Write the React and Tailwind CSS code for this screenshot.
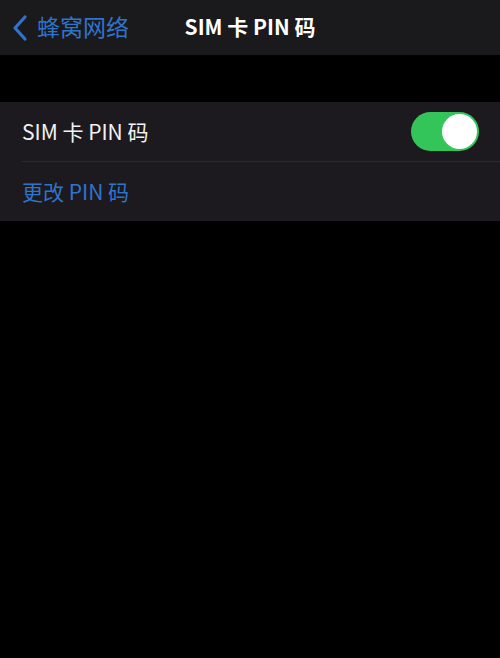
import React, { useState } from "react";

const font = { fontFamily: '"Noto Sans CJK SC", "Noto Sans", sans-serif' };

const App = () => {
  const [enabled, setEnabled] = useState(true);

  return (
    <div className="w-[500px] h-[658px] bg-black text-white overflow-hidden" style={font}>
      {/* Nav bar */}
      <div className="relative h-[55px] bg-[#1a191b] flex items-center">
        <button className="flex items-center pl-[10px] text-[#2f74cc]">
          <svg width="20" height="28" viewBox="0 0 20 28" fill="none">
            <path d="M15 3 L5 14 L15 25" stroke="currentColor" strokeWidth="3.2" strokeLinecap="round" strokeLinejoin="round" />
          </svg>
          <span className="ml-[7px] text-[23px] leading-none -mt-[2px]">蜂窝网络</span>
        </button>
        <div className="absolute left-0 right-0 top-0 h-[52px] flex items-center justify-center pointer-events-none">
          <span className="text-[21px] font-semibold leading-none whitespace-pre">SIM 卡 PIN 码</span>
        </div>
      </div>

      {/* Group */}
      <div className="mt-[47px] bg-[#1c1a1e]">
        <div className="flex items-center justify-between h-[59px] pl-[22px] pr-[21px]">
          <span className="text-[21px] leading-none text-[#f2f2f2] whitespace-pre">SIM 卡 PIN 码</span>
          <button
            onClick={() => setEnabled(!enabled)}
            className={`relative w-[68px] h-[39px] rounded-full ${enabled ? "bg-[#34c55a]" : "bg-[#39393d]"}`}
          >
            <span
              className={`absolute top-[2px] w-[35px] h-[35px] rounded-full bg-white ${enabled ? "right-[2px]" : "left-[2px]"}`}
            />
          </button>
        </div>
        <div className="ml-[22px] h-px bg-[#2c2a2e]" />
        <div className="flex items-center h-[59px] pl-[22px]">
          <span className="text-[21px] leading-none text-[#2f74cc] whitespace-pre">更改 PIN 码</span>
        </div>
      </div>
    </div>
  );
};

export default App;
